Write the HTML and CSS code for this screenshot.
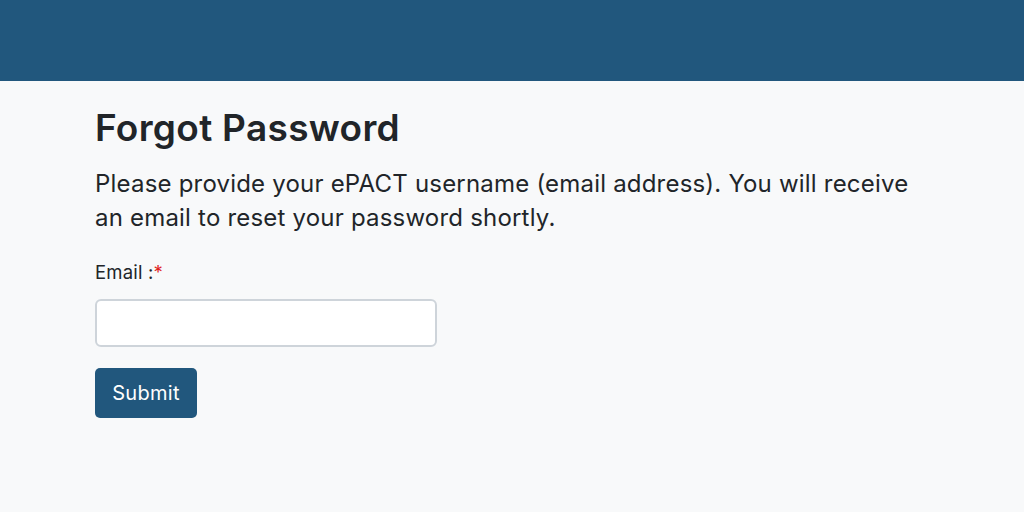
FILE: index.html
```html
<!DOCTYPE html>
<html>
<head>
<meta charset="utf-8">
<link rel="stylesheet" href="styles.css">
</head>
<body>
<header class="topbar"></header>
<main class="content">
  <h1 class="title">Forgot Password</h1>
  <p class="intro">Please provide your ePACT username (email address). You will receive an email to reset your password shortly.</p>
  <form class="form">
    <label class="label" for="email">Email :<span class="req">*</span></label>
    <input class="input" id="email" type="text">
    <button class="btn" type="button">Submit</button>
  </form>
</main>
</body>
</html>
```

FILE: styles.css
```css
html, body {
  margin: 0;
  padding: 0;
  background: #f8f9fa;
  font-family: Inter, "Helvetica Neue", Arial, sans-serif;
  color: #212529;
}
.topbar {
  height: 81px;
  background: #21577d;
}
.content {
  padding: 23px 95px 0;
}
.title {
  margin: 0;
  font-size: 37px;
  font-weight: 600;
  line-height: 48px;
  letter-spacing: 0.3px;
}
.intro {
  margin: 15px 0 0;
  width: 830px;
  font-size: 24px;
  line-height: 34px;
  letter-spacing: 0.2px;
}
.form {
  display: flex;
  flex-direction: column;
  align-items: flex-start;
  margin-top: 25px;
}
.label {
  font-size: 18.5px;
  line-height: 24px;
  letter-spacing: 0.2px;
}
.req {
  color: #e0241f;
}
.input {
  margin-top: 15px;
  width: 342px;
  height: 48px;
  box-sizing: border-box;
  border: 2px solid #ced4da;
  border-radius: 6px;
  background: #fff;
}
.btn {
  margin-top: 21px;
  width: 102px;
  height: 50px;
  border: none;
  border-radius: 5px;
  background: #21577d;
  color: #fff;
  font-family: Inter, Arial, sans-serif;
  font-size: 20px;
  letter-spacing: 0.3px;
}
```
